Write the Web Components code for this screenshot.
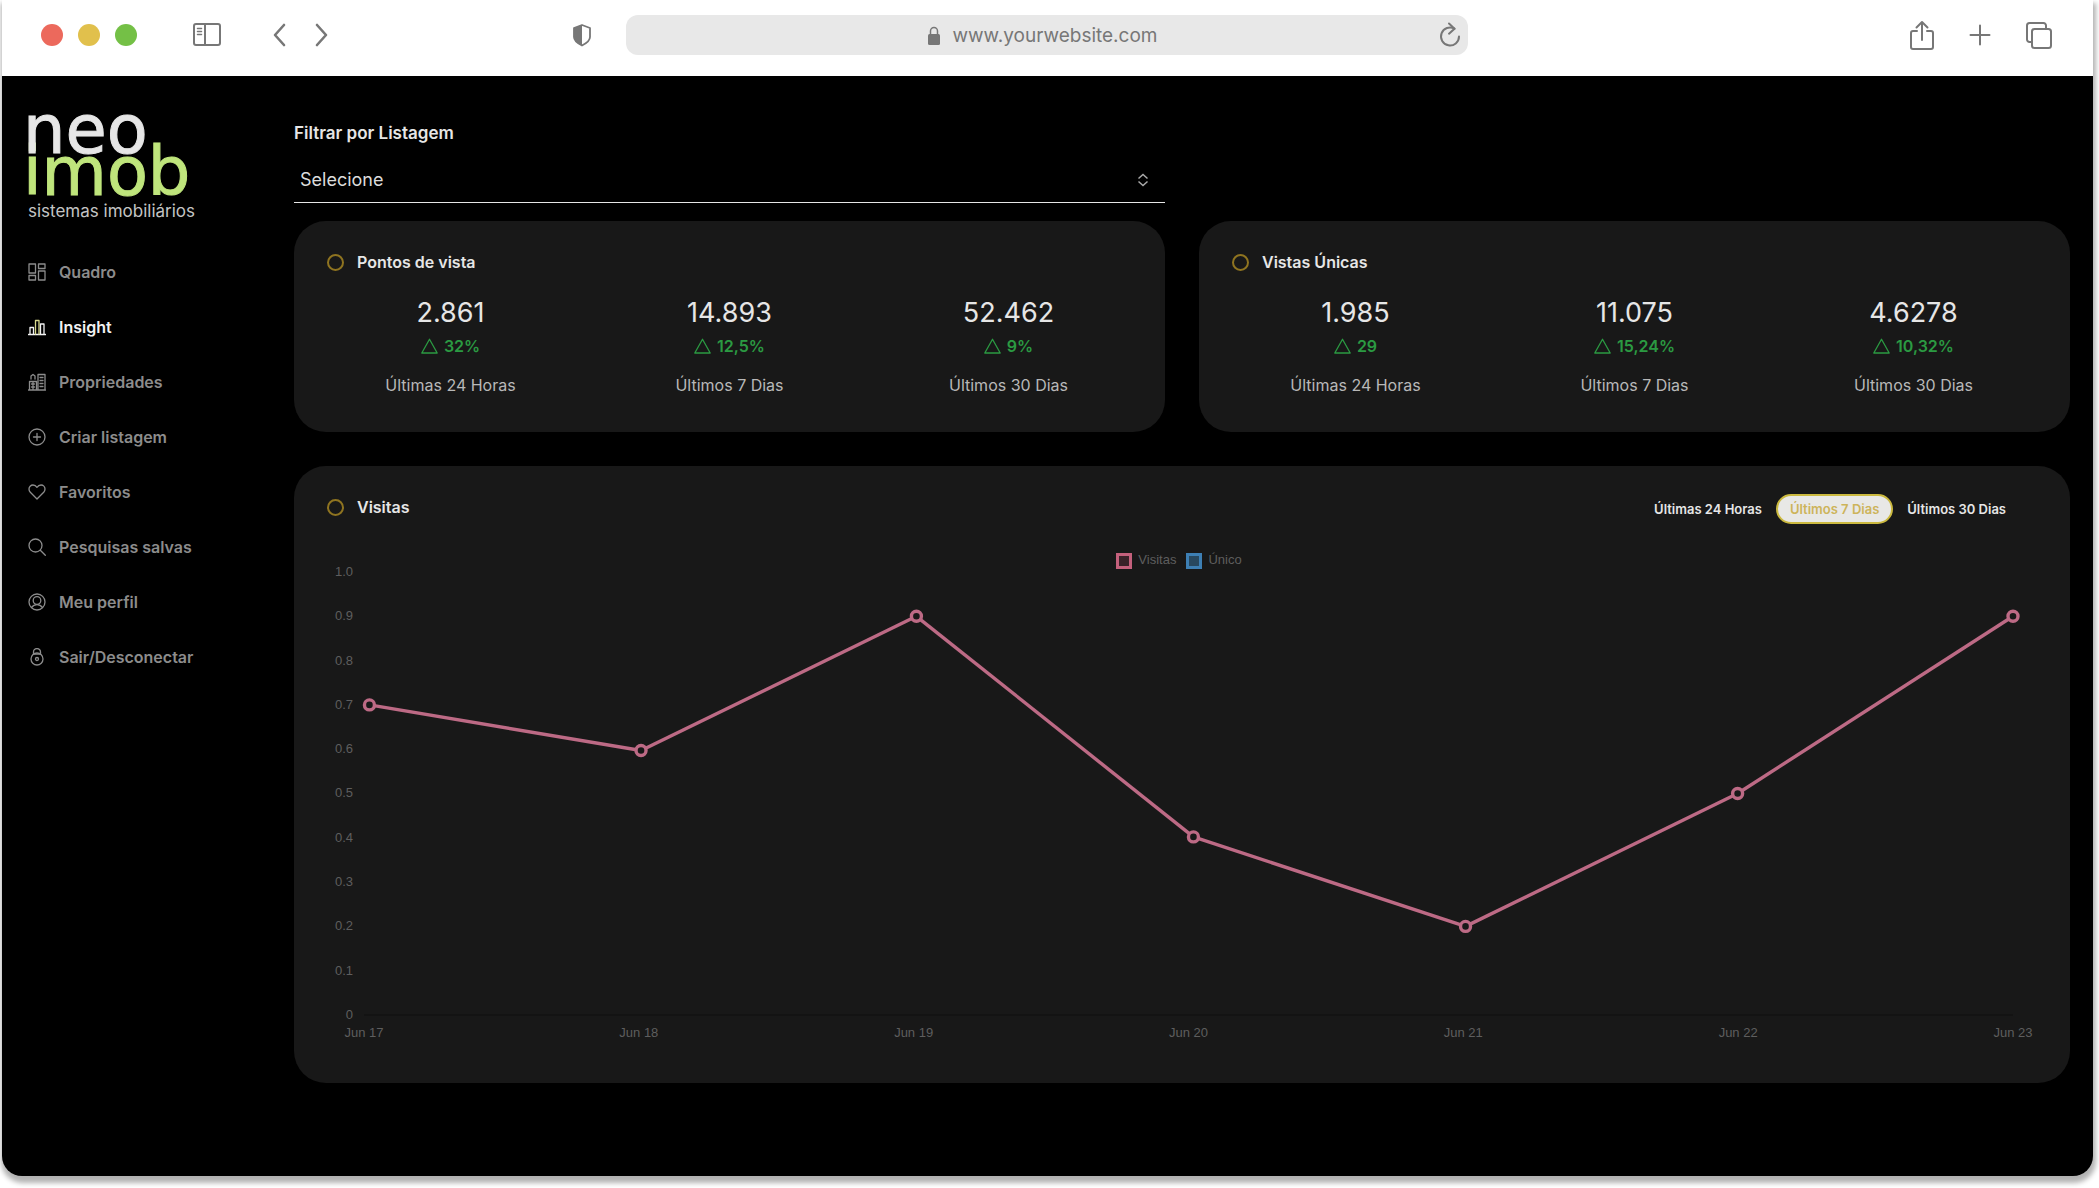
<!DOCTYPE html>
<html lang="pt-BR">
<head>
<meta charset="utf-8">
<meta name="viewport" content="width=device-width, initial-scale=1">
<title>neo imob</title>
<style>
  body {
    margin: 0;
    background: #fff;
    font-family: Inter, "Liberation Sans", sans-serif;
  }
</style>
</head>
<body>
<browser-window>
  <browser-toolbar slot="toolbar" address="www.yourwebsite.com"></browser-toolbar>
  <side-nav slot="side">
    <nav-item icon="board">Quadro</nav-item>
    <nav-item icon="insight" active>Insight</nav-item>
    <nav-item icon="buildings">Propriedades</nav-item>
    <nav-item icon="plus">Criar listagem</nav-item>
    <nav-item icon="heart">Favoritos</nav-item>
    <nav-item icon="search">Pesquisas salvas</nav-item>
    <nav-item icon="user">Meu perfil</nav-item>
    <nav-item icon="lock">Sair/Desconectar</nav-item>
  </side-nav>
  <insight-page>
    <list-filter slot="filter" label="Filtrar por Listagem" value="Selecione"></list-filter>
    <dash-card slot="stats" heading="Pontos de vista">
      <stat-row>
        <stat-figure value="2.861" change="32%">Últimas 24 Horas</stat-figure>
        <stat-figure value="14.893" change="12,5%">Últimos 7 Dias</stat-figure>
        <stat-figure value="52.462" change="9%">Últimos 30 Dias</stat-figure>
      </stat-row>
    </dash-card>
    <dash-card slot="stats" heading="Vistas Únicas">
      <stat-row>
        <stat-figure value="1.985" change="29">Últimas 24 Horas</stat-figure>
        <stat-figure value="11.075" change="15,24%">Últimos 7 Dias</stat-figure>
        <stat-figure value="4.6278" change="10,32%">Últimos 30 Dias</stat-figure>
      </stat-row>
    </dash-card>
    <dash-card slot="chart" heading="Visitas">
      <period-tabs slot="actions"></period-tabs>
      <visits-chart></visits-chart>
    </dash-card>
  </insight-page>
</browser-window>

<script>
// Small helper: open shadow root filled with markup
function render(el, html) {
  el.attachShadow({ mode: 'open' }).innerHTML = html;
  return el.shadowRoot;
}

class BrowserWindow extends HTMLElement {
  connectedCallback() {
    render(this, `
      <style>
        :host {
          display: flex;
          flex-direction: column;
          box-sizing: border-box;
          min-height: calc(100vh - 12px);
          margin: 0 6px 12px 2px;
          background: #000;
          border-radius: 0 0 20px 20px;
          box-shadow: 1px 5px 5px 2px rgba(0, 0, 0, 0.3);
        }
        .body {
          flex: 1;
          display: grid;
          grid-template-columns: 292px minmax(0, 1fr);
        }
      </style>
      <slot name="toolbar"></slot>
      <div class="body">
        <slot name="side"></slot>
        <slot></slot>
      </div>
    `);
  }
}

class BrowserToolbar extends HTMLElement {
  connectedCallback() {
    render(this, `
      <style>
        :host {
          display: grid;
          grid-template-columns: 1fr 842px 1fr;
          align-items: center;
          height: 76px;
          padding: 0 40px 6px 39px;
          box-sizing: border-box;
          background: #fff;
          color: #777;
        }
        .group {
          display: flex;
          align-items: center;
        }
        .dots {
          display: flex;
          gap: 15px;
          margin-right: 55px;
        }
        .dot {
          width: 22px;
          height: 22px;
          border-radius: 50%;
        }
        .red { background: #ec695c; }
        .yellow { background: #e1c04c; }
        .green { background: #74c046; }
        button {
          display: flex;
          padding: 0;
          border: 0;
          background: none;
          color: inherit;
        }
        svg {
          display: block;
          fill: none;
          stroke: currentColor;
          stroke-width: 2;
          stroke-linecap: round;
          stroke-linejoin: round;
        }
        .back { margin: 0 21px 0 48px; }
        .shield { margin-left: auto; margin-right: 34px; }
        .address {
          display: grid;
          grid-template-columns: 1fr auto 1fr;
          align-items: center;
          height: 40px;
          padding: 0 7px;
          box-sizing: border-box;
          border-radius: 12px;
          background: #e8e8e8;
        }
        .url {
          grid-column: 2;
          display: flex;
          align-items: center;
          gap: 12px;
          padding: 2px 10px 0 0;
          font: 19px/24px Inter, "Liberation Sans", sans-serif;
        }
        .reload { justify-self: end; }
        .right { justify-content: flex-end; gap: 34px; }
      </style>
      <div class="group">
        <div class="dots">
          <span class="dot red"></span>
          <span class="dot yellow"></span>
          <span class="dot green"></span>
        </div>
        <button aria-label="Sidebar">
          <svg width="30" height="24" viewBox="0 0 30 24">
            <rect x="2" y="1" width="26" height="21" rx="2"/>
            <path d="M13 1v21"/>
            <path d="M5.500 5.500h4M5.500 8.500h4M5.500 11.500h4" stroke-width="1.500"/>
          </svg>
        </button>
        <button class="back" aria-label="Back">
          <svg width="20" height="24" viewBox="0 0 20 24"><path d="M14 2L5 12l9 10" stroke-width="2.600"/></svg>
        </button>
        <button aria-label="Forward">
          <svg width="20" height="24" viewBox="0 0 20 24"><path d="M6 2l9 10-9 10" stroke-width="2.600"/></svg>
        </button>
        <button class="shield" aria-label="Privacy">
          <svg width="20" height="24" viewBox="0 0 20 24">
            <path d="M10 2l8 3v9c0 4-4 6.500-8 8.500-4-2-8-4.500-8-8.500V5z" stroke-width="1.800"/>
            <path d="M10 2L2 5v9c0 4 4 6.500 8 8.500z" fill="currentColor" stroke="none"/>
          </svg>
        </button>
      </div>
      <div class="address">
        <div class="url">
          <svg width="14" height="20" viewBox="0 0 14 20">
            <rect x="1" y="8" width="12" height="11" rx="1.500" fill="currentColor" stroke="none"/>
            <path d="M3.500 9V5a3.500 3.500 0 0 1 7 0v4" stroke-width="1.500"/>
          </svg>
          <span>${this.getAttribute('address')}</span>
        </div>
        <button class="reload" aria-label="Reload">
          <svg width="22" height="26" viewBox="0 0 22 26">
            <path d="M15.500 6.700A9 9 0 1 0 20 14.500"/>
            <path d="M10 1.500l5.500 5.200-5.500 5"/>
          </svg>
        </button>
      </div>
      <div class="group right">
        <button aria-label="Share">
          <svg width="26" height="32" viewBox="0 0 26 32">
            <path d="M8 12H4a2 2 0 0 0-2 2v14a2 2 0 0 0 2 2h18a2 2 0 0 0 2-2V14a2 2 0 0 0-2-2h-4"/>
            <path d="M13 21V3M7.500 8.500L13 3l5.500 5.500"/>
          </svg>
        </button>
        <button aria-label="New tab">
          <svg width="22" height="22" viewBox="0 0 22 22"><path d="M11 1.500v19M1.500 11h19"/></svg>
        </button>
        <button aria-label="Tabs">
          <svg width="28" height="28" viewBox="0 0 28 28">
            <rect x="7" y="8" width="19" height="19" rx="2.500"/>
            <path d="M7 21H4.500A2.500 2.500 0 0 1 2 18.500v-14A2.500 2.500 0 0 1 4.500 2h14A2.500 2.500 0 0 1 21 4.500V8"/>
          </svg>
        </button>
      </div>
    `);
  }
}

class SideNav extends HTMLElement {
  connectedCallback() {
    render(this, `
      <style>
        :host {
          display: block;
          padding: 33px 26px;
        }
        .logo {
          display: block;
          margin: 0 0 21px -5px;
          color: #e6e6e6;
          text-decoration: none;
          font: 67px/42px "DejaVu Sans", sans-serif;
        }
        .logo span {
          display: block;
        }
        .neo, .imob {
          -webkit-text-stroke: 1px currentColor;
        }
        /* the first line sits over the second, so the n covers the dot of the i */
        .neo {
          position: relative;
          z-index: 1;
        }
        .imob { color: #bfe57c; }
        .logo .tagline {
          margin: 6px 0 0 5px;
          color: #c4c4c4;
          font: 17px/24px Inter, sans-serif;
          white-space: nowrap;
        }
        nav {
          display: flex;
          flex-direction: column;
        }
      </style>
      <a class="logo" href="#">
        <span class="neo">neo</span>
        <span class="imob">imob</span>
        <span class="tagline">sistemas imobiliários</span>
      </a>
      <nav><slot></slot></nav>
    `);
  }
}

const NAV_ICONS = {
  board: '<path d="M1 1h6.500v9H1zM10.500 1H17v4.500h-6.500zM10.500 8H17v9h-6.500zM1 12.500h6.500V17H1z"/>',
  insight: '<path d="M0.500 16.500h17M2 16V9.500h3.500V16"/><path d="M7.500 16V2.500H11V16" stroke="#d8d98c"/><path d="M12.500 16V6H16v10"/>',
  buildings: '<path d="M10 17V1.500h7V17M1.500 17V8.500h7V17M0.500 17h17M3 6V3l2-1.500L7 3v3M12 4.500h3M12 7.500h3M12 10.500h3M12 13.500h3M3.500 11h3M3.500 14h3M5 8.500V17"/>',
  plus: '<circle cx="9" cy="9" r="8"/><path d="M9 5.500v7M5.500 9h7"/>',
  heart: '<path d="M9 16L2.300 9.200A4.300 4.300 0 0 1 1 6a4 4 0 0 1 4-4c1.700 0 3 .8 4 2.300C10 2.800 11.300 2 13 2a4 4 0 0 1 4 4c0 1.200-.5 2.300-1.300 3.200z"/>',
  search: '<circle cx="7.500" cy="7.500" r="6.500"/><path d="M12.300 12.300L17.300 17.300"/>',
  user: '<circle cx="9" cy="9" r="8"/><circle cx="9" cy="7.500" r="3.800"/><path d="M3.500 14.500c1.500-2 3.200-2.800 5.500-2.800s4 .8 5.500 2.800"/>',
  lock: '<circle cx="9" cy="11" r="6"/><circle cx="9" cy="11" r="1.500"/><path d="M5.500 6V4a3.500 3.500 0 0 1 7 0v2M5.500 6.200h7"/>'
};

class NavItem extends HTMLElement {
  connectedCallback() {
    render(this, `
      <style>
        :host {
          display: block;
          color: #8c8c8c;
        }
        :host([active]) { color: #f2f2f2; }
        a {
          display: flex;
          align-items: center;
          gap: 13px;
          height: 55px;
          color: inherit;
          text-decoration: none;
          font-size: 16px;
          font-weight: 600;
          line-height: 24px;
          white-space: nowrap;
        }
        svg {
          flex: none;
          fill: none;
          stroke: currentColor;
          stroke-width: 1.300;
          stroke-linecap: round;
          stroke-linejoin: round;
        }
      </style>
      <a href="#">
        <svg width="18" height="18" viewBox="0 0 18 18">${NAV_ICONS[this.getAttribute('icon')]}</svg>
        <slot></slot>
      </a>
    `);
  }
}

class InsightPage extends HTMLElement {
  connectedCallback() {
    render(this, `
      <style>
        :host {
          display: block;
          padding: 45px 23px 40px 0;
        }
        .stats {
          display: grid;
          grid-template-columns: 1fr 1fr;
          gap: 34px;
          margin-bottom: 34px;
        }
        .filter {
          display: grid;
          grid-template-columns: 1fr 1fr;
          gap: 34px;
          margin-bottom: 18px;
        }
      </style>
      <div class="filter"><slot name="filter"></slot></div>
      <div class="stats"><slot name="stats"></slot></div>
      <slot name="chart"></slot>
    `);
  }
}

class ListFilter extends HTMLElement {
  connectedCallback() {
    render(this, `
      <style>
        :host { display: block; }
        label {
          display: block;
          color: #e6e6e6;
          font-size: 17px;
          font-weight: 600;
          line-height: 24px;
        }
        .field {
          position: relative;
          margin-top: 12px;
        }
        select {
          display: block;
          width: 100%;
          height: 46px;
          padding: 0 6px;
          border: 0;
          border-bottom: 1px solid #e6e6e6;
          border-radius: 0;
          background: none;
          color: #dcdcdc;
          font: 18px/24px Inter, sans-serif;
          appearance: none;
        }
        svg {
          position: absolute;
          top: 16px;
          right: 16px;
          fill: none;
          stroke: #aaa;
          stroke-width: 1.500;
          pointer-events: none;
        }
      </style>
      <label for="list">${this.getAttribute('label')}</label>
      <div class="field">
        <select id="list"><option>${this.getAttribute('value')}</option></select>
        <svg width="12" height="14" viewBox="0 0 12 14"><path d="M1.500 5.500L6 1.500l4.500 4M1.500 8.500l4.500 4 4.500-4"/></svg>
      </div>
    `);
  }
}

class DashCard extends HTMLElement {
  connectedCallback() {
    render(this, `
      <style>
        :host {
          display: block;
          box-sizing: border-box;
          padding: 23px 17px 35px;
          border-radius: 32px;
          background: #181818;
        }
        header {
          display: flex;
          align-items: center;
          justify-content: space-between;
          height: 36px;
          padding: 0 33px 0 16px;
        }
        h2 {
          display: flex;
          align-items: center;
          gap: 13px;
          margin: 0;
          color: #e6e6e6;
          font-size: 16px;
          font-weight: 600;
          line-height: 24px;
        }
        h2::before {
          content: '';
          width: 13px;
          height: 13px;
          border: 2px solid #8f7420;
          border-radius: 50%;
        }
      </style>
      <header>
        <h2>${this.getAttribute('heading')}</h2>
        <slot name="actions"></slot>
      </header>
      <slot></slot>
    `);
  }
}

class StatRow extends HTMLElement {
  connectedCallback() {
    render(this, `
      <style>
        :host {
          display: grid;
          grid-template-columns: repeat(3, 1fr);
          padding-top: 15px;
        }
      </style>
      <slot></slot>
    `);
  }
}

class StatFigure extends HTMLElement {
  connectedCallback() {
    render(this, `
      <style>
        :host {
          display: flex;
          flex-direction: column;
          align-items: center;
          color: #b8b8b8;
          font-size: 16px;
          line-height: 24px;
        }
        .value {
          color: #e6e6e6;
          font-size: 27px;
          line-height: 36px;
        }
        .change {
          display: flex;
          align-items: center;
          gap: 6px;
          margin: 3px 0 15px;
          color: #2b9a42;
          font-weight: 600;
        }
        svg {
          fill: none;
          stroke: currentColor;
          stroke-width: 1.300;
          stroke-linejoin: round;
        }
      </style>
      <span class="value">${this.getAttribute('value')}</span>
      <span class="change">
        <svg width="17" height="16" viewBox="0 0 17 16"><path d="M8.500 1.200L16.200 15H0.800z"/></svg>
        ${this.getAttribute('change')}
      </span>
      <span><slot></slot></span>
    `);
  }
}

class PeriodTabs extends HTMLElement {
  connectedCallback() {
    const root = render(this, `
      <style>
        :host {
          display: flex;
          margin-top: 3px;
        }
        button {
          height: 30px;
          padding: 0 12px;
          border: 2px solid transparent;
          border-radius: 15px;
          background: none;
          color: #e6e6e6;
          font: 600 13px/20px Inter, sans-serif;
          cursor: pointer;
        }
        button[aria-pressed="true"] {
          border-color: #cbb93f;
          background: #e8e8e6;
          color: #cdb45a;
        }
      </style>
      <button aria-pressed="false">Últimas 24 Horas</button>
      <button aria-pressed="true">Últimos 7 Dias</button>
      <button aria-pressed="false">Últimos 30 Dias</button>
    `);

    const buttons = root.querySelectorAll('button');
    buttons.forEach(button => {
      button.addEventListener('click', () => {
        buttons.forEach(b => b.setAttribute('aria-pressed', b === button));
      });
    });
  }
}

class VisitsChart extends HTMLElement {
  connectedCallback() {
    const ticks = ['1.0', '0.9', '0.8', '0.7', '0.6', '0.5', '0.4', '0.3', '0.2', '0.1', '0'];
    const days = ['Jun 17', 'Jun 18', 'Jun 19', 'Jun 20', 'Jun 21', 'Jun 22', 'Jun 23'];
    // x in percent of the plot width, y as the value itself
    const points = [[0.33, 0.7], [16.8, 0.597], [33.5, 0.9], [50.3, 0.402], [66.8, 0.2], [83.3, 0.5], [100, 0.9]];
    const top = v => (1 - v) * 100;

    const lines = points.slice(1).map(([x, v], i) => {
      const [px, pv] = points[i];
      return `<line x1="${px}%" y1="${top(pv)}%" x2="${x}%" y2="${top(v)}%"/>`;
    }).join('');
    const dots = points.map(([x, v]) => `<circle cx="${x}%" cy="${top(v)}%" r="5"/>`).join('');

    render(this, `
      <style>
        :host {
          display: block;
          padding: 27px 40px 7px 16px;
          color: #5e5e5e;
          font-family: "Liberation Sans", Arial, sans-serif;
          font-size: 13px;
          line-height: 16px;
        }
        .legend {
          display: flex;
          justify-content: center;
          gap: 10px;
          padding-left: 18px;
        }
        .key {
          display: flex;
          gap: 6px;
        }
        .key::before {
          content: '';
          width: 10px;
          height: 10px;
          margin-top: 1px;
          border: 3px solid #c4607c;
          background: #3a2229;
        }
        .key.unique::before {
          border-color: #3d7fb4;
          background: #28485f;
        }
        .plot {
          display: grid;
          grid-template-columns: 26px 1fr;
          column-gap: 11px;
          padding-top: 3px;
        }
        .ticks {
          display: flex;
          flex-direction: column;
          justify-content: space-between;
          margin: -8px 0;
          text-align: right;
        }
        svg {
          display: block;
          width: 100%;
          height: 443px;
          overflow: visible;
          stroke: #bd6a85;
          stroke-width: 3.400;
        }
        .axis {
          stroke: #0e0e0e;
          stroke-width: 1;
        }
        circle { fill: #181818; }
        .days {
          grid-column: 2;
          display: flex;
          justify-content: space-between;
          margin-top: 10px;
        }
        /* zero-width boxes, so each label is centred on its own tick */
        .days span {
          display: flex;
          justify-content: center;
          width: 0;
          white-space: nowrap;
        }
      </style>
      <div class="legend">
        <span class="key">Visitas</span>
        <span class="key unique">Único</span>
      </div>
      <div class="plot">
        <div class="ticks">${ticks.map(t => `<span>${t}</span>`).join('')}</div>
        <svg role="img" aria-label="Visitas">
          <line class="axis" x1="0" y1="100%" x2="100%" y2="100%"/>
          ${lines}${dots}
        </svg>
        <div class="days">${days.map(d => `<span>${d}</span>`).join('')}</div>
      </div>
    `);
  }
}

customElements.define('browser-window', BrowserWindow);
customElements.define('browser-toolbar', BrowserToolbar);
customElements.define('side-nav', SideNav);
customElements.define('nav-item', NavItem);
customElements.define('insight-page', InsightPage);
customElements.define('list-filter', ListFilter);
customElements.define('dash-card', DashCard);
customElements.define('stat-row', StatRow);
customElements.define('stat-figure', StatFigure);
customElements.define('period-tabs', PeriodTabs);
customElements.define('visits-chart', VisitsChart);
</script>
</body>
</html>
